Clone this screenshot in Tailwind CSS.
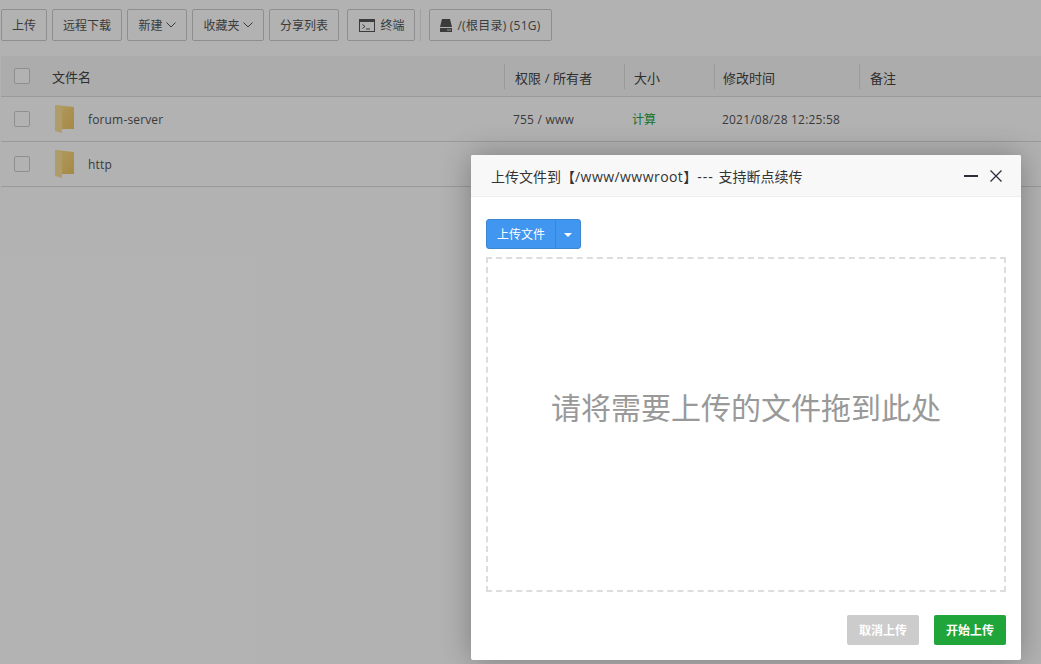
<!DOCTYPE html>
<html lang="zh">
<head>
<meta charset="utf-8">
<script src="https://cdn.jsdelivr.net/npm/@tailwindcss/browser@4"></script>
</head>
<body class="bg-white">
<div class="relative w-[1041px] h-[664px] overflow-hidden bg-white text-[#555] font-['Open_Sans','Noto_Sans_CJK_SC',sans-serif]">
  <div class="flex items-center h-[32px] mt-[9px] ml-[1px]">
    <button class="w-[46px] h-[32px] pt-[2px] border border-[#ccc] rounded-[2px] text-[12px] flex items-center justify-center">上传</button>
    <button class="ml-[5px] w-[70px] h-[32px] pt-[2px] border border-[#ccc] rounded-[2px] text-[12px] flex items-center justify-center">远程下载</button>
    <button class="ml-[5px] w-[60px] h-[32px] pt-[2px] border border-[#ccc] rounded-[2px] text-[12px] flex items-center justify-center gap-[3px]">新建<svg class="mb-[2px]" width="10" height="6" viewBox="0 0 10 6" fill="none" stroke="#555" stroke-width="1"><path d="M.5.5 5 5 9.500.5"/></svg></button>
    <button class="ml-[5px] w-[72px] h-[32px] pt-[2px] border border-[#ccc] rounded-[2px] text-[12px] flex items-center justify-center gap-[3px]">收藏夹<svg class="mb-[2px]" width="10" height="6" viewBox="0 0 10 6" fill="none" stroke="#555" stroke-width="1"><path d="M.5.5 5 5 9.500.5"/></svg></button>
    <button class="ml-[5px] w-[70px] h-[32px] pt-[2px] border border-[#ccc] rounded-[2px] text-[12px] flex items-center justify-center">分享列表</button>
    <button class="ml-[8px] w-[68px] h-[32px] pt-[2px] pl-[2px] border border-[#ccc] rounded-[2px] text-[12px] flex items-center justify-center gap-[5px]"><svg class="mb-[2px]" width="16" height="13" viewBox="0 0 16 13" fill="none"><rect x=".5" y=".5" width="15" height="12" stroke="#555"/><rect x="0" y="0" width="16" height="3" fill="#555"/><path d="M3.500 5.500 6 7.500 3.500 9.500" stroke="#555"/><path d="M7 10h4" stroke="#555"/></svg>终端</button>
    <div class="ml-[5px] w-px h-[32px] bg-[#e5e5e5]"></div>
    <button class="ml-[8px] w-[123px] h-[32px] pt-[2px] border border-[#ccc] rounded-[2px] text-[12px] tracking-[0.25px] flex items-center justify-center gap-[5px]"><svg class="mb-[2px]" width="12" height="13" viewBox="0 0 12 13"><path d="M2 0h8l2 8H0z" fill="#555"/><rect x="0" y="9" width="12" height="4" fill="#555"/><rect x="7" y="10.500" width="4" height="1" fill="#ddd"/></svg>/(根目录) (51G)</button>
  </div>

  <div class="mt-[15px] h-[41px] bg-[#f6f6f6] border-b border-[#ddd] flex items-center text-[13px] text-[#444] ml-[1px]">
    <div class="w-[51px] flex pl-[13px]"><span class="w-[16px] h-[16px] border border-[#ccc] rounded-[2px] bg-white"></span></div>
    <div class="w-[452px] pt-[4px]">文件名</div>
    <div class="w-[120px] h-[25px] border-l border-[#ddd] pl-[10px] leading-[29px] tracking-[0.1px]">权限 / 所有者</div>
    <div class="w-[90px] h-[25px] border-l border-[#ddd] pl-[9px] leading-[29px]">大小</div>
    <div class="w-[145px] h-[25px] border-l border-[#ddd] pl-[8px] leading-[29px]">修改时间</div>
    <div class="h-[25px] border-l border-[#ddd] pl-[10px] leading-[29px]">备注</div>
  </div>

  <div class="h-[45px] border-b border-[#ddd] flex items-center text-[12px] ml-[1px]">
    <div class="w-[51px] flex pl-[13px]"><span class="w-[16px] h-[16px] border border-[#ccc] rounded-[2px] bg-white"></span></div>
    <svg class="w-[24px] h-[30px] shrink-0" viewBox="0 0 24 30"><defs><linearGradient id="f1" x1="0" y1="0" x2="1" y2="1"><stop offset="0" stop-color="#fde08c"/><stop offset="1" stop-color="#eec463"/></linearGradient></defs><path d="M4 1 22 3V25H4z" fill="url(#f1)"/><path d="M3 1 10 4V29L3 27z" fill="#fbe09a"/></svg>
    <div class="w-[429px] pl-[12px] pt-[2px] tracking-[0.15px]">forum-server</div>
    <div class="w-[119px] pl-[8px] pt-[2px] tracking-[0.2px]">755 / www</div>
    <div class="w-[90px] pl-[8px] pt-[2px] text-[#20a53a]">计算</div>
    <div class="pl-[8px] pt-[2px] tracking-[0.2px]">2021/08/28 12:25:58</div>
  </div>
  <div class="h-[45px] border-b border-[#ddd] flex items-center text-[12px] ml-[1px]">
    <div class="w-[51px] flex pl-[13px]"><span class="w-[16px] h-[16px] border border-[#ccc] rounded-[2px] bg-white"></span></div>
    <svg class="w-[24px] h-[30px] shrink-0" viewBox="0 0 24 30"><path d="M4 1 22 3V25H4z" fill="url(#f1)"/><path d="M3 1 10 4V29L3 27z" fill="#fbe09a"/></svg>
    <div class="pl-[12px] pt-[2px] tracking-[0.2px]">http</div>
  </div>

  <div class="absolute inset-0 bg-black/30"></div>

  <div class="absolute left-[471px] top-[155px] w-[550px] h-[505px] bg-white rounded-[2px] shadow-[0_0_30px_rgba(0,0,0,0.3)] flex flex-col">
    <div class="h-[42px] shrink-0 bg-[#f8f8f8] border-b border-[#eee] rounded-t-[2px] flex items-center pl-[20px] pr-[19px] text-[14px] text-[#333]">
      <span class="flex-1 pt-[1px]">上传文件到【<span class="tracking-[0.45px]">/www/wwwroot</span>】<span class="tracking-[1px]">--- </span>支持断点续传</span>
      <span class="w-[14px] h-[2px] bg-[#2e2d3c] mr-[12px] mt-[1px]"></span>
      <svg width="12" height="12" viewBox="0 0 12 12" fill="none" stroke="#2e2d3c" stroke-width="1.300"><path d="M.5.500 11.500 11.500M11.500.500 .5 11.500"/></svg>
    </div>
    <div class="px-[15px] pt-[22px] flex-1 flex flex-col">
      <div class="flex w-[95px] h-[30px] rounded-[3px] border border-[#3c85cf] bg-[#4196f0] text-white text-[12px]">
        <span class="w-[68px] pt-[2px] flex items-center justify-center">上传文件</span>
        <span class="flex-1 border-l border-[#3c85cf] flex items-center justify-center"><span class="w-0 h-0 border-x-[4px] border-x-transparent border-t-[4px] border-t-white mt-[1px]"></span></span>
      </div>
      <div class="mt-[8px] w-[520px] h-[335px] pb-[34px] border-2 border-dashed border-[#ddd] flex items-center justify-center text-[30px] text-[#999]">请将需要上传的文件拖到此处</div>
      <div class="mt-[23px] flex justify-end gap-[15px] text-[12px] font-bold text-white">
        <span class="w-[72px] h-[30px] pt-[1px] rounded-[2px] bg-[#ccc] flex items-center justify-center">取消上传</span>
        <span class="w-[72px] h-[30px] pt-[1px] rounded-[2px] bg-[#20a53a] flex items-center justify-center">开始上传</span>
      </div>
    </div>
  </div>
</div>
</body>
</html>
